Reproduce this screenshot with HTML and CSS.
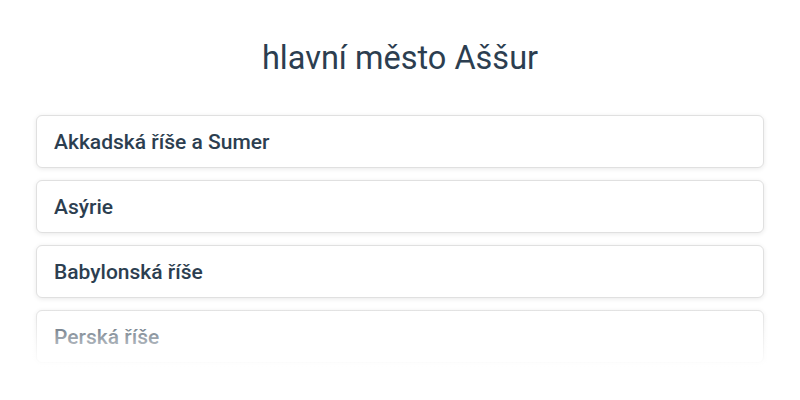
FILE: index.html
```html
<!DOCTYPE html>
<html lang="cs">
<head>
<meta charset="utf-8">
<link rel="stylesheet" href="styles.css">
</head>
<body>
<div class="quiz">
  <h1 class="question">hlavní město Aššur</h1>
  <div class="answers">
    <div class="answer">Akkadská říše a Sumer</div>
    <div class="answer">Asýrie</div>
    <div class="answer">Babylonská říše</div>
    <div class="answer">Perská říše</div>
  </div>
</div>
</body>
</html>
```
FILE: styles.css
```css
html, body {
  margin: 0;
  padding: 0;
  background: #ffffff;
}
body {
  font-family: Roboto, "Noto Sans", sans-serif;
  color: #2c3e50;
}
.quiz {
  padding: 0 36px;
}
.question {
  margin: 0;
  padding-top: 39px;
  height: 77px;
  box-sizing: border-box;
  text-align: center;
  font-size: 32.5px;
  font-weight: 400;
  line-height: 38px;
  color: #2c3e50;
}
.answers {
  position: relative;
  margin-top: 38px;
  display: flex;
  flex-direction: column;
  gap: 12px;
  padding: 0 0 6px;
}
.answers::after {
  content: "";
  position: absolute;
  left: -6px;
  right: -6px;
  bottom: 0;
  height: 64px;
  background: linear-gradient(to bottom, rgba(255,255,255,0), rgba(255,255,255,0.9) 90%, #ffffff);
  pointer-events: none;
}
.answer {
  flex: 0 0 auto;
  height: 53px;
  box-sizing: border-box;
  border: 1px solid #e0e0e0;
  border-radius: 6px;
  box-shadow: 0 1px 5px rgba(0,0,0,0.09);
  padding: 0 17px;
  display: flex;
  align-items: center;
  font-size: 21px;
  font-weight: 500;
  color: #2c3e50;
  background: #fff;
}
```
